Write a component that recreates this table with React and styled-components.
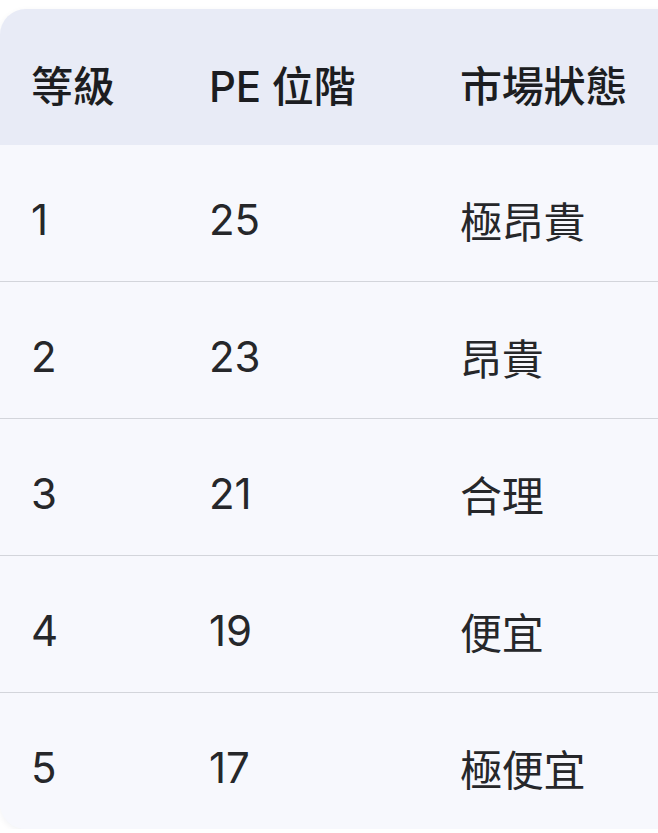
import React from "react";
import styled, { createGlobalStyle } from "styled-components";

const Global = createGlobalStyle`
  html, body { margin: 0; padding: 0; background: #ffffff; overflow: hidden; }
  body { font-family: "Inter", "Noto Sans CJK TC", sans-serif; }
`;

const Page = styled.div`
  padding-top: 9px;
  width: 100%;
`;

const Table = styled.div`
  width: calc(100% + 30px);
  border-radius: 26px 0 0 26px;
  overflow: hidden;
  background: #f7f8fd;
  box-shadow: 0 2px 6px rgba(20, 30, 60, 0.06);
`;

const Row = styled.div`
  display: grid;
  grid-template-columns: 178px 251px 1fr;
  height: ${(p) => (p.$header || p.$last ? 136 : 137)}px;
  box-sizing: border-box;
  background: ${(p) => (p.$header ? "#e8ebf6" : "#f7f8fd")};
  border-bottom: ${(p) => (p.$last || p.$header ? "none" : "1px solid #d3d5db")};
`;

const Cell = styled.div`
  display: flex;
  align-items: center;
  padding: 12px 0 0 31px;
  font-size: 42px;
  font-weight: ${(p) => (p.$header ? 500 : 400)};
  color: ${(p) => (p.$header ? "#1c1d21" : "#26272a")};
  white-space: nowrap;
  letter-spacing: -0.2px;
`;

const rows = [
  ["1", "25", "極昂貴"],
  ["2", "23", "昂貴"],
  ["3", "21", "合理"],
  ["4", "19", "便宜"],
  ["5", "17", "極便宜"],
];

export default function App() {
  return (
    <>
      <Global />
      <Page>
        <Table>
          <Row $header>
            <Cell $header>等級</Cell>
            <Cell $header>PE 位階</Cell>
            <Cell $header>市場狀態</Cell>
          </Row>
          {rows.map((r, i) => (
            <Row key={i} $last={i === rows.length - 1}>
              {r.map((c, j) => (
                <Cell key={j}>{c}</Cell>
              ))}
            </Row>
          ))}
        </Table>
      </Page>
    </>
  );
}
